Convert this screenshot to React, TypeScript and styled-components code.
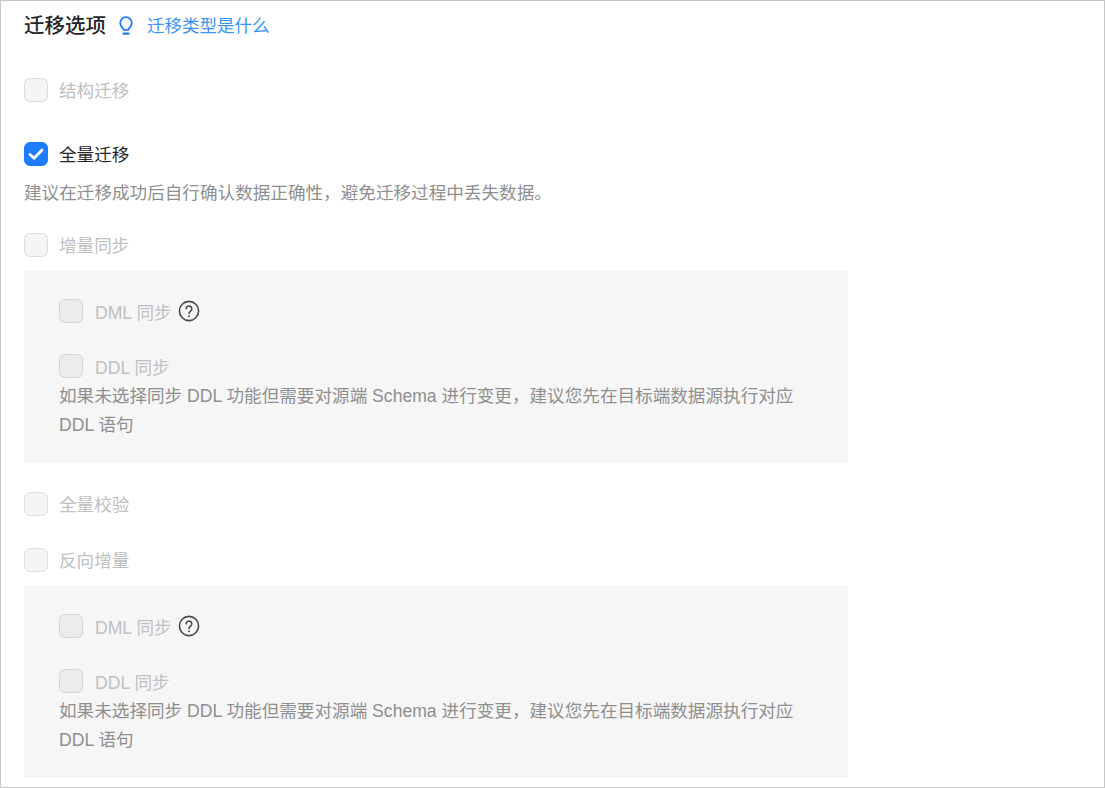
import React from "react";
import styled, { createGlobalStyle } from "styled-components";

const GlobalStyle = createGlobalStyle`
  html, body {
    margin: 0;
    padding: 0;
    background: #fff;
  }
  body {
    font-family: "Liberation Sans", "Noto Sans CJK SC", sans-serif;
  }
`;

const Frame = styled.div`
  width: 1105px;
  height: 788px;
  box-sizing: border-box;
  border: 1px solid #c6c6c6;
  padding: 0 23px;
  overflow: hidden;
  background: #fff;
`;

const Header = styled.div`
  display: flex;
  align-items: center;
  height: 50px;
  margin-bottom: 27px;
`;

const Title = styled.h2`
  margin: 0 12px 0 0;
  font-size: 20.5px;
  line-height: 50px;
  font-weight: 500;
  color: #262626;
`;

const HelpLink = styled.a`
  margin: 0 0 4px 13px;
  font-size: 17.5px;
  color: #3a95f8;
  text-decoration: none;
`;

const Row = styled.label<{ $gap?: number }>`
  display: flex;
  align-items: center;
  height: 24px;
  margin-bottom: ${(p) => p.$gap ?? 0}px;
`;

const Box = styled.span<{ $checked?: boolean }>`
  flex: none;
  display: flex;
  align-items: center;
  justify-content: center;
  width: 24px;
  height: 24px;
  box-sizing: border-box;
  border-radius: 6px;
  border: 1px solid ${(p) => (p.$checked ? "#1f7bff" : "rgba(0, 0, 0, 0.1)")};
  background: ${(p) => (p.$checked ? "#1f7bff" : "rgba(0, 0, 0, 0.04)")};
`;

const RowLabel = styled.span<{ $active?: boolean; $nested?: boolean }>`
  margin-left: ${(p) => (p.$nested ? 12 : 11)}px;
  padding-top: ${(p) => (p.$nested ? 3 : 2)}px;
  font-size: 17.6px;
  line-height: 24px;
  color: ${(p) => (p.$active ? "#262626" : "#c0c0c0")};
`;

const Hint = styled.p`
  margin: 13px 0 26px;
  font-size: 17.6px;
  line-height: 28px;
  color: #8f8f8f;
`;

const Panel = styled.div<{ $gap: number }>`
  width: 824px;
  height: 192px;
  box-sizing: border-box;
  padding: 28px 35px 0;
  margin-bottom: ${(p) => p.$gap}px;
  background: #f6f6f6;
`;

const PanelHint = styled.p`
  margin: 4px 0 0;
  font-size: 17.6px;
  line-height: 29px;
  color: #8f8f8f;
`;

const QuestionIcon = styled.svg`
  margin-left: 6px;
  flex: none;
`;

const CheckMark = () => (
  <svg width="18" height="18" viewBox="0 0 18 18" fill="none">
    <path d="M3 9.4l4 3.8 8-8.2" stroke="#fff" strokeWidth="2.8" strokeLinecap="round" strokeLinejoin="round" />
  </svg>
);

const BulbIcon = () => (
  <svg width="16" height="20" viewBox="0 0 16 20" fill="none" stroke="#1f7bff" strokeWidth="1.8" strokeLinecap="round" strokeLinejoin="round">
    <path d="M5.6 13.8c0-1.8-3.4-3-3.4-6.8a5.8 5.8 0 0 1 11.6 0c0 3.8-3.4 5-3.4 6.8z" />
    <path d="M5.4 17.6h5.2" strokeWidth="2.2" />
  </svg>
);

const Question = () => (
  <QuestionIcon width="22" height="22" viewBox="0 0 22 22" fill="none" stroke="#4a4a4a" strokeWidth="1.6" strokeLinecap="round">
    <circle cx="11" cy="11" r="9.6" />
    <path d="M8.2 8.8a2.8 2.8 0 1 1 4.4 2.3c-1 .7-1.6 1.2-1.6 2.4" />
    <path d="M11 16.2v.1" strokeWidth="1.9" />
  </QuestionIcon>
);

function SyncPanel({ gap }: { gap: number }) {
  return (
    <Panel $gap={gap}>
      <Row $gap={31}>
        <Box />
        <RowLabel $nested>DML 同步</RowLabel>
        <Question />
      </Row>
      <Row>
        <Box />
        <RowLabel $nested>DDL 同步</RowLabel>
      </Row>
      <PanelHint>
        如果未选择同步 DDL 功能但需要对源端 Schema 进行变更，建议您先在目标端数据源执行对应
        <br />
        DDL 语句
      </PanelHint>
    </Panel>
  );
}

export default function App() {
  return (
    <>
      <GlobalStyle />
      <Frame>
        <Header>
          <Title>迁移选项</Title>
          <BulbIcon />
          <HelpLink href="#">迁移类型是什么</HelpLink>
        </Header>
        <Row $gap={40}>
          <Box />
          <RowLabel>结构迁移</RowLabel>
        </Row>
        <Row>
          <Box $checked>
            <CheckMark />
          </Box>
          <RowLabel $active>全量迁移</RowLabel>
        </Row>
        <Hint>建议在迁移成功后自行确认数据正确性，避免迁移过程中丢失数据。</Hint>
        <Row $gap={14}>
          <Box />
          <RowLabel>增量同步</RowLabel>
        </Row>
        <SyncPanel gap={29} />
        <Row $gap={32}>
          <Box />
          <RowLabel>全量校验</RowLabel>
        </Row>
        <Row $gap={14}>
          <Box />
          <RowLabel>反向增量</RowLabel>
        </Row>
        <SyncPanel gap={0} />
      </Frame>
    </>
  );
}
